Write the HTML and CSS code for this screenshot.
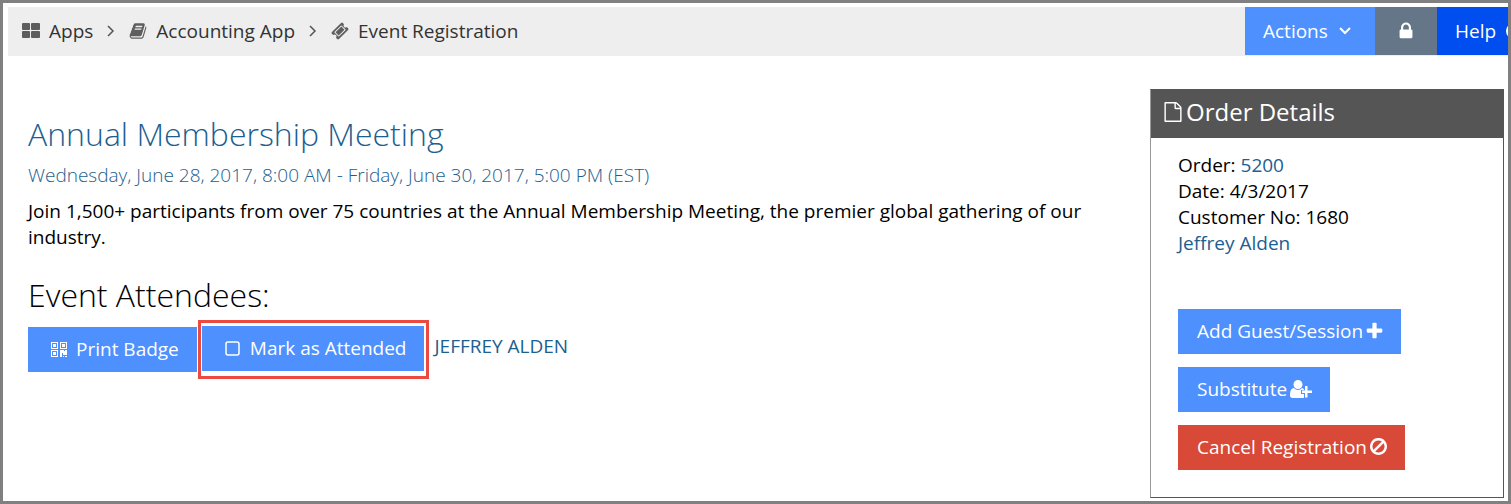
FILE: index.html
```
<!DOCTYPE html>
<html lang="en">
  <head>
    <meta charset="utf-8">
    <title>Event Registration</title>
    <link rel="stylesheet" href="styles.css">
  </head>
<body>
  <header class="topbar">
    <nav class="breadcrumb">
      <a href="#">
        <svg class="icon" viewBox="0 0 18 18"><rect x="0" y="1" width="8" height="7" rx="1"/><rect x="9" y="1" width="9" height="7" rx="1"/><rect x="0" y="9" width="8" height="7" rx="1"/><rect x="9" y="9" width="9" height="7" rx="1"/></svg>
        Apps
      </a>
      <svg class="sep" viewBox="0 0 8 12"><path d="M1 1l5 5-5 5"/></svg>
      <a href="#">
        <svg class="icon" viewBox="0 0 1792 1792"><path d="M1703 478q40 57 18 129l-275 906q-19 64-76.500 107.500t-122.500 43.500h-923q-77 0-148.500-53.500t-99.500-131.500q-24-67-2-127 0-4 3-27t4-37q1-8-3-21.500t-3-19.500q2-11 8-21t16.500-23.500 16.500-23.500q23-38 45-91.500t30-91.500q3-10 .5-30t-.5-28q3-11 17-28t17-23q21-36 42-92t25-90q1-9-2.500-32t.5-28q4-13 22-30.500t22-22.500q19-26 42.500-84.500t27.500-96.500q1-8-3-25.500t-2-26.500q2-8 9-18t18-23 17-21q8-12 16.500-30.500t15-35 16-36 19.500-32 26.500-23.500 36-11.500 47.500 5.500l-1 3q38-9 51-9h761q74 0 114 56t18 130l-274 906q-36 119-71.500 153.500t-128.500 34.500h-869q-27 0-38 15-11 16-1 43 24 70 144 70h923q29 0 56-15.500t35-41.500l300-987q7-22 5-57 38 15 59 43zm-1064 2q-4 13 2 22.500t20 9.500h608q13 0 25.500-9.500t16.500-22.500l21-64q4-13-2-22.500t-20-9.500h-608q-13 0-25.500 9.500t-16.500 22.500zm-83 256q-4 13 2 22.500t20 9.500h608q13 0 25.500-9.500t16.500-22.500l21-64q4-13-2-22.500t-20-9.500h-608q-13 0-25.500 9.500t-16.500 22.500z"/></svg>
        Accounting App
      </a>
      <svg class="sep" viewBox="0 0 8 12"><path d="M1 1l5 5-5 5"/></svg>
      <a href="#">
        <svg class="icon" viewBox="0 0 1792 1792"><path d="M1024 452l316 316-572 572-316-316zm-211 979l618-618q19-19 19-45t-19-45l-362-362q-18-18-45-18t-45 18l-618 618q-19 19-19 45t19 45l362 362q18 18 45 18t45-18zm889-637l-907 908q-37 37-90.500 37t-90.500-37l-126-126q56-56 56-136t-56-136-136-56-136 56l-125-126q-37-37-37-90.500t37-90.500l907-906q37-37 90.500-37t90.500 37l125 125q-56 56-56 136t56 136 136 56 136-56l126 125q37 37 37 90.500t-37 90.500z"/></svg>
        Event Registration
      </a>
    </nav>
    <div class="tools">
      <button type="button" class="tool actions">Actions
        <svg class="caret" viewBox="0 0 12 8"><path d="M1 1l5 5 5-5"/></svg>
      </button>
      <button type="button" class="tool lock" aria-label="Lock">
        <svg class="icon" viewBox="0 0 1792 1792"><path d="M640 768h512v-192q0-106-75-181t-181-75-181 75-75 181v192zm832 96v576q0 40-28 68t-68 28h-960q-40 0-68-28t-28-68v-576q0-40 28-68t68-28h32v-192q0-184 132-316t316-132 316 132 132 316v192h32q40 0 68 28t28 68z"/></svg>
      </button>
      <button type="button" class="tool help"><span>Help</span>
        <svg class="icon" viewBox="0 0 18 18"><circle cx="9" cy="9" r="8"/></svg>
      </button>
    </div>
  </header>

  <div class="content">
    <main class="event">
      <h1>Annual Membership Meeting</h1>
      <p class="when">Wednesday, June 28, 2017, 8:00 AM - Friday, June 30, 2017, 5:00 PM (EST)</p>
      <p class="about">Join 1,500+ participants from over 75 countries at the Annual Membership Meeting, the premier global gathering of our industry.</p>
      <h2>Event Attendees:</h2>
      <div class="attendee">
        <button type="button" class="btn">
          <svg class="icon" viewBox="0 0 18 18"><path fill-rule="evenodd" d="M1 2h7v7H1zM2 3v5h5V3zM3 4h3v3H3zM10 2h7v7h-7zM11 3v5h5V3zM12 4h3v3h-3zM1 10h7v7H1zM2 11v5h5v-5zM3 12h3v3H3zM10 10h4v1h1v-1h2v5h-4v-2h-1v4h-2zM13 16h1v1h-1zM15 16h2v1h-2z"/></svg>
          Print Badge
        </button>
        <div class="highlight">
          <button type="button" class="btn">
            <svg class="icon box" viewBox="0 0 18 18"><rect x="2" y="3" width="13" height="13" rx="2"/></svg>
            Mark as Attended
          </button>
        </div>
        <a href="#">JEFFREY ALDEN</a>
      </div>
    </main>

    <aside class="order">
      <h3>
        <svg class="icon" viewBox="128 0 1536 1792"><path d="M1596 380q28 28 48 76t20 88v1152q0 40-28 68t-68 28h-1344q-40 0-68-28t-28-68v-1600q0-40 28-68t68-28h896q40 0 88 20t76 48zm-444-244v376h376q-10-29-22-41l-313-313q-12-12-41-22zm384 1528v-1024h-416q-40 0-68-28t-28-68v-416h-768v1536h1280z"/></svg>
        Order Details
      </h3>
      <div class="order-body">
        <div class="order-info">
          <div>Order: <a href="#">5200</a></div>
          <div>Date: 4/3/2017</div>
          <div>Customer No: 1680</div>
          <div><a href="#">Jeffrey Alden</a></div>
        </div>
        <button type="button" class="btn">Add Guest/Session
          <svg class="icon" viewBox="192 64 1408 1536"><path d="M1600 736v192q0 40-28 68t-68 28h-416v416q0 40-28 68t-68 28h-192q-40 0-68-28t-28-68v-416h-416q-40 0-68-28t-28-68v-192q0-40 28-68t68-28h416v-416q0-40 28-68t68-28h192q40 0 68 28t28 68v416h416q40 0 68 28t28 68z"/></svg>
        </button>
        <button type="button" class="btn">Substitute
          <svg class="icon wide" viewBox="0 0 22 18"><path d="M8 0a4.500 4.500 0 0 1 4.500 4.500C12.500 7 10.500 9 8 9S3.500 7 3.500 4.500A4.500 4.500 0 0 1 8 0zM4 8c1 1.200 2.400 2 4 2s3-.8 4-2c.8.1 1.500.6 2 1.400V10h-3v4h3v3.700c-.4.2-.9.300-1.400.3H2.500C1 18 0 17 0 15.500 0 11 1 8.300 4 8zM15 6h2.500v4.500H22V13h-4.500v4.500H15V13h-3v-2.500h3z"/></svg>
        </button>
        <button type="button" class="btn danger">Cancel Registration
          <svg class="icon" viewBox="128 128 1536 1536"><path d="M1440 893q0-161-87-295l-754 753q137 89 297 89 111 0 211.500-43.500t173.500-116.500 116-174.500 43-212.500zm-999 299l755-754q-135-91-300-91-148 0-273 73t-198 199-73 274q0 162 89 299zm1223-299q0 157-61 300t-163.500 246-245 164-298.500 61-298.500-61-245-164-163.500-246-61-300 61-299.500 163.500-245.500 245-164 298.500-61 298.500 61 245 164 163.500 245.500 61 299.500z"/></svg>
        </button>
      </div>
    </aside>
  </div>
</body>
</html>
```
FILE: styles.css
```
* {
	box-sizing: border-box;
}
body {
	margin: 0;
	min-height: 100vh;
	border: 3px solid #808080;
	background: #fff;
	color: #000;
	font: 19px/26px "Open Sans", "Noto Sans", sans-serif;
	overflow-x: hidden;
}
a {
	color: #1b6090;
	text-decoration: none;
}
h1, h2, h3, p {
	margin: 0;
}
svg {
	flex: none;
	fill: currentColor;
}
.icon {
	width: 18px;
	height: 18px;
}

/* top bar */
.topbar {
	display: flex;
	justify-content: space-between;
	height: 49px;
	margin: 4px 0 0 5px;
	background: #eee;
	overflow: hidden;
}
.breadcrumb {
	display: flex;
	align-items: center;
	gap: 14px;
	height: 48px;
	padding-left: 14px;
}
.breadcrumb a {
	display: flex;
	align-items: center;
	gap: 9px;
	color: #333;
}
.breadcrumb .icon {
	color: #5e5e5e;
}
.sep, .caret {
	fill: none;
	stroke: #555;
	stroke-width: 2;
}
.sep {
	width: 8px;
	height: 12px;
	stroke-width: 1.5;
}
.caret {
	width: 12px;
	height: 8px;
	stroke: #fff;
}
.tools {
	display: flex;
	height: 48px;
}
.tool {
	display: flex;
	align-items: center;
	border: 0;
	padding: 0 18px;
	color: #fff;
	font: inherit;
}
.actions {
	width: 130px;
	gap: 11px;
	background: #4d90fe;
}
.lock {
	justify-content: center;
	width: 62px;
	background: #647687;
}
.lock .icon {
	width: 20px;
	height: 20px;
}
.help {
	width: 71px;
	gap: 9px;
	background: #004df0;
	overflow: hidden;
}

/* event */
.content {
	display: flex;
	align-items: flex-start;
	padding: 33px 4px 0 25px;
}
.event {
	flex: 1;
	padding: 24px 56px 0 0;
}
h1, h2 {
	font-size: 32px;
	line-height: 42px;
	font-weight: 300;
}
h1 {
	color: #1b6090;
}
.when {
	padding: 7px 0 10px;
	color: #1b6090;
	font-weight: 300;
}
h2 {
	margin: 24px 0 4px;
}
.attendee {
	display: flex;
	align-items: center;
}
.attendee > a {
	padding: 0 0 8px 5px;
}
.highlight {
	margin-left: 1px;
	padding: 3px 2px 5px 1px;
	border: 3px solid #ec4a41;
}
.btn {
	display: flex;
	align-items: center;
	height: 45px;
	padding: 0 18px 2px 19px;
	border: 0;
	background: #4d90fe;
	color: #fff;
	font: inherit;
}
.attendee .btn {
	gap: 8px;
	padding: 0 18px 2px 22px;
}
.box {
	fill: none;
	stroke: #fff;
	stroke-width: 1.5;
}

/* order details */
.order {
	flex: none;
	width: 354px;
	border: 1px solid #555;
	border-left-color: #999;
}
.order h3 {
	display: flex;
	align-items: center;
	gap: 4px;
	height: 48px;
	padding: 0 0 4px 13px;
	background: #555;
	color: #fff;
	font-size: 24px;
	font-weight: 400;
}
.order h3 .icon {
	height: 20px;
}
.order-body {
	display: flex;
	flex-direction: column;
	align-items: flex-start;
	gap: 13px;
	padding: 14px 27px 27px;
}
.order-info {
	margin-bottom: 40px;
}
.order .btn {
	gap: 3px;
}
.order .btn .icon {
	height: 17px;
	width: 17px;
}
.order .btn .wide {
	width: 22px;
	height: 18px;
}
.danger {
	background: #d84937;
}
```
